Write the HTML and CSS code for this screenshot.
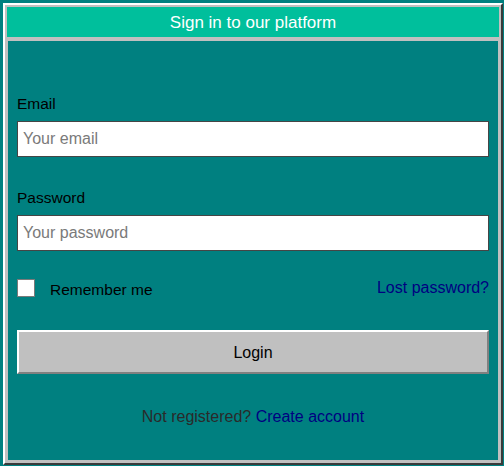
FILE: index.html
```html
<!DOCTYPE html>
<html>
<head>
<meta charset="utf-8">
<link rel="stylesheet" href="styles.css">
</head>
<body>
<div class="window">
  <div class="header">Sign in to our platform</div>
  <div class="content">
    <label class="label">Email</label>
    <input class="field" type="text" placeholder="Your email">
    <label class="label label-pw">Password</label>
    <input class="field" type="password" placeholder="Your password">
    <div class="row">
      <span class="check"></span>
      <span class="remember">Remember me</span>
      <a class="lost" href="#">Lost password?</a>
    </div>
    <button class="login" type="button">Login</button>
    <p class="footer">Not registered? <a class="create" href="#">Create account</a></p>
  </div>
</div>
</body>
</html>
```
FILE: styles.css
```css
html, body {
  margin: 0;
  padding: 0;
  background: #008080;
}
body {
  font-family: "Liberation Sans", Arial, sans-serif;
}
.window {
  margin: 3px 0 0 3px;
  width: 500px;
  height: 462px;
  box-sizing: border-box;
  border: 2px solid;
  border-color: #ffffff #3a3a3a #3a3a3a #ffffff;
  background: #c0c0c0;
  display: flex;
  flex-direction: column;
}
.header {
  margin: 2px 2px 4px 2px;
  height: 30px;
  box-sizing: border-box;
  padding-top: 2px;
  background: #00bf9c;
  color: #ffffff;
  font-size: 17px;
  line-height: 28px;
  text-align: center;
}
.content {
  flex: 1;
  margin: 0 3px 3px 3px;
  background: #008080;
  padding: 52px 9px 0 9px;
  display: flex;
  flex-direction: column;
}
.label {
  display: block;
  font-size: 15.5px;
  line-height: 22px;
  height: 22px;
  color: #000000;
  margin-bottom: 6px;
}
.label-pw {
  margin-top: 30px;
}
.field {
  display: block;
  box-sizing: border-box;
  width: 472px;
  height: 36px;
  margin: 0;
  border: 1px solid #454545;
  background: #ffffff;
  padding: 0 5px;
  font-family: "Liberation Sans", Arial, sans-serif;
  font-size: 16px;
  outline: none;
}
.field::placeholder {
  color: #7a7a7a;
}
.row {
  display: flex;
  align-items: flex-start;
  margin-top: 28px;
  height: 22px;
}
.check {
  width: 18px;
  height: 18px;
  box-sizing: border-box;
  border: 1px solid #7a7a7a;
  background: #ffffff;
}
.remember {
  margin-left: 15px;
  font-size: 15.5px;
  line-height: 22px;
  color: #000000;
}
.lost {
  margin-left: auto;
  margin-top: -2px;
  font-size: 16px;
  line-height: 22px;
  color: #000080;
  text-decoration: none;
}
.login {
  margin-top: 29px;
  width: 472px;
  height: 44px;
  box-sizing: border-box;
  border: 2px solid;
  border-color: #ffffff #808080 #808080 #ffffff;
  background: #c0c0c0;
  font-family: "Liberation Sans", Arial, sans-serif;
  font-size: 16px;
  color: #000000;
  padding: 2px 0 0 0;
}
.footer {
  margin: 33px 0 0 0;
  text-align: center;
  font-size: 16px;
  line-height: 20px;
  color: #2a2a2a;
}
.create {
  color: #000080;
  text-decoration: none;
}
```
